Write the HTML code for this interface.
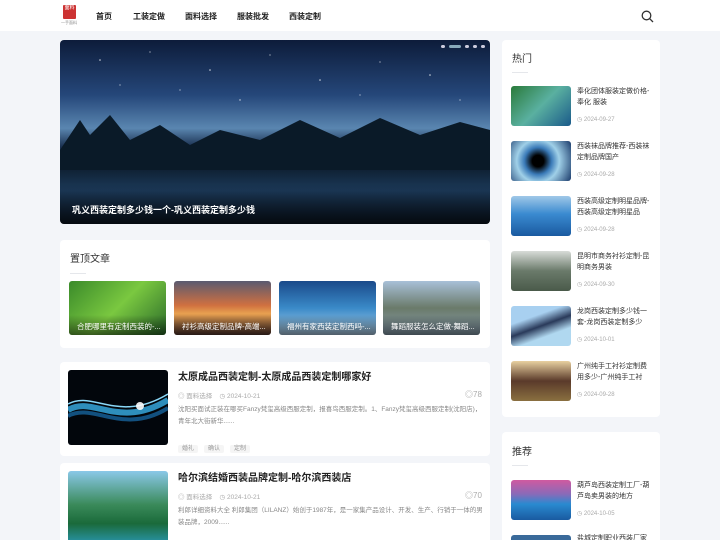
<!DOCTYPE html>
<html><head><meta charset="utf-8"><style>
*{margin:0;padding:0;box-sizing:border-box}
html,body{width:720px;height:540px;overflow:hidden}
body{background:#f3f5f9;font-family:"Liberation Sans","Noto Sans CJK SC",sans-serif;position:relative;color:#333}
.a{position:absolute}
.hdr{left:0;top:0;width:720px;height:31px;background:#fff}
.nav{top:11px;font-size:8px;font-weight:bold;color:#222}
.card{background:#fff;border-radius:4px}
.th{border-radius:3px;overflow:hidden}
.cap{position:absolute;left:0;right:0;bottom:0;height:20px;background:linear-gradient(transparent,rgba(0,0,0,.55));color:#fff;font-size:7.5px;padding:6px 8px 0;white-space:nowrap;overflow:hidden}
.h{font-size:10px;color:#333}
.ln{width:16px;height:1px;background:#e5e7eb}
.st{font-size:7px;color:#333;line-height:11px}
.dt{font-size:6px;color:#aaa}
.meta{font-size:6.5px;color:#aaa}
.ex{font-size:6.5px;color:#888;line-height:12px}
.tag{font-size:6px;color:#999;background:#f5f5f5;padding:1px 4px;border-radius:2px;margin-right:6px}
</style></head><body>
<div class="a hdr"></div>
<div class="a" style="left:63px;top:5px;width:13px;height:14px;background:#c33;border-radius:1px;color:#fff;font-size:5px;line-height:7px;text-align:center">面料</div>
<div class="a" style="left:61px;top:20px;font-size:4px;color:#888">一手面料</div>
<div class="a nav" style="left:96px">首页</div>
<div class="a nav" style="left:133px">工装定做</div>
<div class="a nav" style="left:185px">面料选择</div>
<div class="a nav" style="left:237px">服装批发</div>
<div class="a nav" style="left:289px">西装定制</div>
<svg class="a" style="left:641px;top:10px" width="13" height="13" viewBox="0 0 13 13"><circle cx="5.5" cy="5.5" r="4.3" fill="none" stroke="#333" stroke-width="1.3"/><path d="M8.7 8.7L12 12" stroke="#333" stroke-width="1.3"/></svg>

<div class="a th" style="left:60px;top:40px;width:430px;height:184px;border-radius:4px;background:linear-gradient(180deg,#0d1c3a 0%,#25477a 30%,#5a86b0 48%,#1a3050 58%,#0c1c2c 68%,#1c3a5a 82%,#0a1420 100%)">
<svg class="a" style="left:0;top:0" width="430" height="184"><g fill="#fff" opacity=".8"><circle cx="40" cy="20" r=".8"/><circle cx="90" cy="12" r=".6"/><circle cx="150" cy="30" r=".8"/><circle cx="210" cy="15" r=".6"/><circle cx="260" cy="40" r=".8"/><circle cx="320" cy="22" r=".6"/><circle cx="370" cy="35" r=".8"/><circle cx="120" cy="50" r=".6"/><circle cx="300" cy="55" r=".6"/><circle cx="60" cy="45" r=".6"/><circle cx="400" cy="60" r=".6"/><circle cx="180" cy="60" r=".7"/></g>
<path d="M0 110 L20 80 L30 95 L50 75 L70 100 L100 85 L130 105 L160 90 L200 100 L240 80 L280 98 L320 78 L360 95 L400 82 L430 90 L430 130 L0 130Z" fill="#0a1a28"/></svg>
<div class="a" style="left:0;right:0;bottom:0;height:40px;background:linear-gradient(transparent,rgba(0,0,0,.5))"></div>
<div class="a" style="left:12px;top:163px;color:#fff;font-size:9px;font-weight:bold">巩义西装定制多少钱一个-巩义西装定制多少钱</div>
<div class="a" style="left:381px;top:5px;width:4px;height:3px;background:#ccd;border-radius:2px"></div>
<div class="a" style="left:389px;top:5px;width:12px;height:3px;background:#8ab;border-radius:2px"></div>
<div class="a" style="left:405px;top:5px;width:4px;height:3px;background:#ccd;border-radius:2px"></div>
<div class="a" style="left:413px;top:5px;width:4px;height:3px;background:#ccd;border-radius:2px"></div>
<div class="a" style="left:421px;top:5px;width:4px;height:3px;background:#ccd;border-radius:2px"></div>
</div>

<div class="a card" style="left:60px;top:240px;width:430px;height:108px"></div>
<div class="a h" style="left:70px;top:250px">置顶文章</div>
<div class="a ln" style="left:70px;top:273px"></div>
<div class="a th" style="left:69px;top:281px;width:97px;height:54px;background:linear-gradient(135deg,#3a8a2a,#7ac840 50%,#2a6a2a)"><div class="cap">合肥哪里有定制西装的-...</div></div>
<div class="a th" style="left:174px;top:281px;width:97px;height:54px;background:linear-gradient(180deg,#5a5a70,#d07040 45%,#e8a050 60%,#5a3a30)"><div class="cap">衬衫高级定制品牌-高端...</div></div>
<div class="a th" style="left:279px;top:281px;width:97px;height:54px;background:linear-gradient(180deg,#1a4a8a,#3a8ac8 50%,#b0d0e8)"><div class="cap">福州有家西装定制西吗-...</div></div>
<div class="a th" style="left:383px;top:281px;width:97px;height:54px;background:linear-gradient(180deg,#a8c0d8,#6a7a6a 50%,#8aa0b0)"><div class="cap">舞蹈服装怎么定做-舞蹈...</div></div>

<div class="a card" style="left:60px;top:362px;width:430px;height:94px"></div>
<div class="a th" style="left:68px;top:370px;width:100px;height:75px;background:#02060c"><svg width="100" height="75"><path d="M0 40 C25 25 50 60 100 30" stroke="#3ab0e8" stroke-width="6" fill="none" opacity=".8"/><path d="M0 46 C25 32 55 66 100 38" stroke="#1a70b0" stroke-width="4" fill="none" opacity=".7"/><path d="M0 34 C25 20 50 54 100 24" stroke="#8ad8f8" stroke-width="1.5" fill="none"/><circle cx="72" cy="36" r="4" fill="#fff" opacity=".9"/></svg></div>
<div class="a" style="left:178px;top:368px;font-size:10px;font-weight:bold;color:#222">太原成品西装定制-太原成品西装定制哪家好</div>
<div class="a meta" style="left:178px;top:390px">◎ 面料选择 &nbsp;&nbsp; ◷ 2024-10-21</div>
<div class="a meta" style="left:465px;top:389px;font-size:8px">◎78</div>
<div class="a ex" style="left:178px;top:404px;width:305px">沈阳买面试正装在哪买Fanzy梵玺高级西服定制，报喜鸟西服定制。1、Fanzy梵玺高级西服定制(沈阳店)，青年北大街新华......</div>
<div class="a" style="left:178px;top:437px"><span class="tag">婚礼</span><span class="tag">确认</span><span class="tag">定制</span></div>

<div class="a card" style="left:60px;top:463px;width:430px;height:90px"></div>
<div class="a th" style="left:68px;top:471px;width:100px;height:75px;background:linear-gradient(180deg,#8ac8e8,#3a8a5a 45%,#1a6a3a 70%,#2a9ab8)"></div>
<div class="a" style="left:178px;top:469px;font-size:10px;font-weight:bold;color:#222">哈尔滨结婚西装品牌定制-哈尔滨西装店</div>
<div class="a meta" style="left:178px;top:491px">◎ 面料选择 &nbsp;&nbsp; ◷ 2024-10-21</div>
<div class="a meta" style="left:465px;top:490px;font-size:8px">◎70</div>
<div class="a ex" style="left:178px;top:505px;width:305px">利郎详细资料大全 利郎集团（LILANZ）始创于1987年，是一家集产品设计、开发、生产、行销于一体的男装品牌，2009......</div>

<div class="a card" style="left:502px;top:40px;width:158px;height:377px"></div>
<div class="a h" style="left:512px;top:50px">热门</div>
<div class="a ln" style="left:512px;top:72px"></div>

<div class="a th" style="left:511px;top:86px;width:60px;height:40px;background:linear-gradient(135deg,#2a7a3a,#5ab0a0 50%,#1a5a8a)"></div>
<div class="a st" style="left:577px;top:86px;width:76px">奉化团体服装定做价格-奉化 服装</div>
<div class="a dt" style="left:577px;top:116px">◷ 2024-09-27</div>
<div class="a th" style="left:511px;top:141px;width:60px;height:40px;background:radial-gradient(circle at 45% 50%,#000 15%,#3a7ab8 35%,#a0d0e8 55%,#1a3a6a)"></div>
<div class="a st" style="left:577px;top:141px;width:76px">西装袜品牌推荐-西装袜定制品牌国产</div>
<div class="a dt" style="left:577px;top:171px">◷ 2024-09-28</div>
<div class="a th" style="left:511px;top:196px;width:60px;height:40px;background:linear-gradient(180deg,#a0c8e8,#3a8ad0 45%,#1a5aa0)"></div>
<div class="a st" style="left:577px;top:196px;width:76px">西装高级定制明星品牌-西装高级定制明星品</div>
<div class="a dt" style="left:577px;top:226px">◷ 2024-09-28</div>
<div class="a th" style="left:511px;top:251px;width:60px;height:40px;background:linear-gradient(180deg,#d8dcd8,#6a7a6a 50%,#4a5a4a)"></div>
<div class="a st" style="left:577px;top:251px;width:76px">昆明市商务衬衫定制-昆明商务男装</div>
<div class="a dt" style="left:577px;top:281px">◷ 2024-09-30</div>
<div class="a th" style="left:511px;top:306px;width:60px;height:40px;background:linear-gradient(160deg,#a8d0f0 30%,#2a3a5a 50%,#b0d8f0 70%)"></div>
<div class="a st" style="left:577px;top:306px;width:76px">龙岗西装定制多少钱一套-龙岗西装定制多少</div>
<div class="a dt" style="left:577px;top:336px">◷ 2024-10-01</div>
<div class="a th" style="left:511px;top:361px;width:60px;height:40px;background:linear-gradient(180deg,#e8d0a0,#5a3a2a 50%,#8a7040)"></div>
<div class="a st" style="left:577px;top:361px;width:76px">广州纯手工衬衫定制费用多少-广州纯手工衬</div>
<div class="a dt" style="left:577px;top:391px">◷ 2024-09-28</div>

<div class="a card" style="left:502px;top:432px;width:158px;height:120px"></div>
<div class="a h" style="left:512px;top:443px">推荐</div>
<div class="a ln" style="left:512px;top:465px"></div>
<div class="a th" style="left:511px;top:480px;width:60px;height:40px;background:linear-gradient(180deg,#d05aa0,#8a6ab8 35%,#2a8ad0 60%,#1a5aa0)"></div>
<div class="a st" style="left:577px;top:480px;width:76px">葫芦岛西装定制工厂-葫芦岛卖男装的地方</div>
<div class="a dt" style="left:577px;top:510px">◷ 2024-10-05</div>
<div class="a th" style="left:511px;top:535px;width:60px;height:40px;background:#3a6a9a"></div>
<div class="a st" style="left:577px;top:533px;width:76px">盐城定制职业西装厂家</div>
</body></html>
